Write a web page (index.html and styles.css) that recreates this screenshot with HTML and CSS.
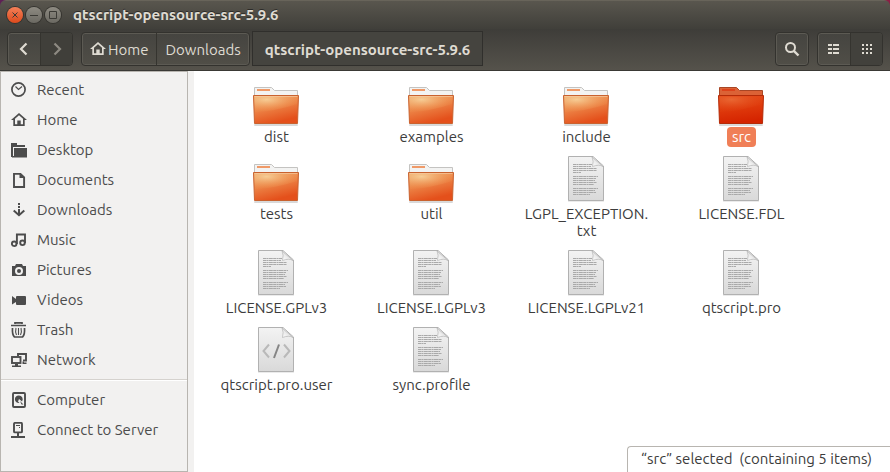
FILE: index.html
```html
<!DOCTYPE html>
<html lang="en">
<head>
<meta charset="utf-8">
<title>qtscript-opensource-src-5.9.6</title>
<link rel="stylesheet" href="styles.css">
</head>
<body>
<svg class="defs" width="0" height="0" aria-hidden="true">
  <defs>
    <linearGradient id="front" x1="0" y1="0" x2="0.4" y2="1">
      <stop offset="0" stop-color="#f0b377"/><stop offset="0.5" stop-color="#ec8245"/><stop offset="1" stop-color="#e4501b"/>
    </linearGradient>
    <radialGradient id="shine" cx="0.28" cy="0.2" r="0.75">
      <stop offset="0" stop-color="#f7d29b" stop-opacity="0.9"/><stop offset="1" stop-color="#f09a55" stop-opacity="0.15"/>
    </radialGradient>
    <linearGradient id="front-on" x1="0" y1="0" x2="0.2" y2="1">
      <stop offset="0" stop-color="#e5501f"/><stop offset="0.5" stop-color="#df3a0c"/><stop offset="1" stop-color="#d52400"/>
    </linearGradient>
    <radialGradient id="shine-on" cx="0.28" cy="0.2" r="0.75">
      <stop offset="0" stop-color="#ea6a35" stop-opacity="0.9"/><stop offset="1" stop-color="#e24a18" stop-opacity="0.1"/>
    </radialGradient>
    <linearGradient id="paper" x1="0" y1="0" x2="0" y2="1">
      <stop offset="0" stop-color="#f3f3f3"/><stop offset="1" stop-color="#d9d9d9"/>
    </linearGradient>
    <linearGradient id="curl" x1="0" y1="1" x2="1" y2="0">
      <stop offset="0" stop-color="#ffffff"/><stop offset="0.5" stop-color="#e6e6e6"/><stop offset="1" stop-color="#bdbdbd"/>
    </linearGradient>
  </defs>
  <symbol id="folder" viewBox="0 0 48 48">
    <rect x="2" y="45" width="44" height="2" rx="1" fill="#000" opacity="0.15"/>
    <path d="M2.500 17V8.500H19.500L22.500 11.500H45.500V17Z" fill="#f3f3f2" stroke="#c4c3c1"/>
    <path d="M5 10h13v2H5z" fill="#f09a68"/>
    <path d="M1.500 16.500H46.500L45.500 44.500H2.500Z" fill="url(#front)" stroke="#c9622f"/>
    <path d="M2.500 17.500H45.500L45 25Q25 32 3 33Z" fill="url(#shine)"/>
    <path d="M2.500 17.500H45.500" stroke="#f8d3ab" opacity="0.6"/>
  </symbol>
  <symbol id="folder-on" viewBox="0 0 48 48">
    <rect x="2" y="45" width="44" height="2" rx="1" fill="#000" opacity="0.15"/>
    <path d="M2.500 17V8.500H19.500L22.500 11.500H45.500V17Z" fill="#db6236" stroke="#a84625"/>
    <path d="M5 10h13v2H5z" fill="#dc421a"/>
    <path d="M1.500 16.500H46.500L45.500 44.500H2.500Z" fill="url(#front-on)" stroke="#b42b08"/>
    <path d="M2.500 17.500H45.500L45 25Q25 32 3 33Z" fill="url(#shine-on)"/>
  </symbol>
  <symbol id="page" viewBox="0 0 48 48">
    <rect x="6" y="44" width="36" height="2" fill="#000" opacity="0.08"/>
    <path d="M6.500 0.500H31L41.500 10V44.500H6.500Z" fill="url(#paper)" stroke="#b1b1b1"/>
    <path d="M30 1Q32 5 30.500 10.500Q37 8 41 10.500Z" fill="url(#curl)" stroke="#b5b5b5" stroke-width="0.7"/>
  </symbol>
  <symbol id="text-file" viewBox="0 0 48 48">
    <use href="#page" width="48" height="48"/>
    <g stroke="#a9a9a9" stroke-dasharray="3 0.4 2 0.4 4 0.4">
      <path d="M11 8.500H30M11 10.500H29M11 12.500H35M11 14.500H35M11 16.500H19M11 20.500H36M11 22.500H34M11 24.500H33M11 26.500H35M11 28.500H32M11 32.500H36M11 34.500H33M11 36.500H34M11 38.500H28"/>
    </g>
  </symbol>
  <symbol id="code-file" viewBox="0 0 48 48">
    <use href="#page" width="48" height="48"/>
    <g fill="none" stroke-width="2">
      <path d="M17 17.500L11.500 24L17 30.500M32 17.500L37.500 24L32 30.500" stroke="#b9b9b9"/>
      <path d="M27 17.500L22 31" stroke="#858585"/>
    </g>
  </symbol>
  <symbol id="home" viewBox="0 0 16 16">
    <path d="M8 1L16 8H13.700V14H2.300V8H0ZM8 3.300L4 6.800V12.300H6.300V8.500H9.700V12.300H12V6.800Z" fill="currentColor" fill-rule="evenodd"/>
  </symbol>
</svg>

<div class="window">
  <header class="chrome">
    <div class="titlebar">
      <button class="wm close" aria-label="Close"><svg viewBox="0 0 16 16"><path d="M5.500 5.500l5 5m0-5l-5 5"/></svg></button>
      <button class="wm" aria-label="Minimize"><svg viewBox="0 0 16 16"><path d="M4 8.500h8"/></svg></button>
      <button class="wm" aria-label="Maximize"><svg viewBox="0 0 16 16"><path d="M4.500 4.500h7v7h-7z"/></svg></button>
      <h1>qtscript-opensource-src-5.9.6</h1>
    </div>
    <div class="toolbar">
      <div class="group">
        <button class="tool" aria-label="Back"><svg viewBox="0 0 16 16"><path d="M10.500 2.500L5 8l5.500 5.500" fill="none" stroke="currentColor" stroke-width="2.200"/></svg></button>
        <button class="tool off" aria-label="Forward"><svg viewBox="0 0 16 16"><path d="M5.500 2.500L11 8l-5.500 5.500" fill="none" stroke="currentColor" stroke-width="2.200"/></svg></button>
      </div>
      <nav class="path" aria-label="Path">
        <div class="group">
          <button class="crumb"><svg viewBox="0 0 16 16"><use href="#home"/></svg>Home</button>
          <button class="crumb">Downloads</button>
        </div>
        <button class="crumb current">qtscript-opensource-src-5.9.6</button>
      </nav>
      <div class="group search">
        <button class="tool" aria-label="Search"><svg viewBox="0 0 16 16"><g fill="none" stroke="currentColor"><circle cx="6.500" cy="6.500" r="4.500" stroke-width="2"/><path d="M9.800 9.800L14.500 14.500" stroke-width="2.400"/></g></svg></button>
      </div>
      <div class="group">
        <button class="tool" aria-label="List view"><svg viewBox="0 0 16 16"><path d="M2 3h4v2H2zM7 3h6v2H7zM2 7h4v2H2zM7 7h6v2H7zM2 11h4v2H2zM7 11h6v2H7z" fill="currentColor"/></svg></button>
        <button class="tool active" aria-label="Icon view"><svg viewBox="0 0 16 16"><path d="M3 3h2v2H3zM7 3h2v2H7zM11 3h2v2h-2zM3 7h2v2H3zM7 7h2v2H7zM11 7h2v2h-2zM3 11h2v2H3zM7 11h2v2H7zM11 11h2v2h-2z" fill="currentColor"/></svg></button>
      </div>
    </div>
  </header>

  <div class="body">
    <nav class="sidebar" aria-label="Places">
      <a href="#"><svg viewBox="0 0 16 16"><circle cx="7.500" cy="7.500" r="6.600" fill="none" stroke="currentColor" stroke-width="1.700"/><path d="M4.500 4.500L7.500 7.500L11 4.500" fill="none" stroke="currentColor" stroke-width="1.200"/></svg>Recent</a>
      <a href="#"><svg viewBox="0 0 16 16"><use href="#home"/></svg>Home</a>
      <a href="#"><svg viewBox="0 0 16 16"><path d="M0 1H6V3H14V5H2V15H0ZM3 6H16V15.500H1V14H3Z" fill="currentColor"/></svg>Desktop</a>
      <a href="#"><svg viewBox="0 0 16 16"><path d="M3 1.900H9.500L13.100 5.500V15H3Z" fill="none" stroke="currentColor" stroke-width="1.900"/><path d="M8.500 1.500V6H13.500Z" fill="currentColor"/></svg>Documents</a>
      <a href="#"><svg viewBox="0 0 16 16"><path d="M7 1h2v2H7zM7 4h2v2H7zM7 7h2v6H7z" fill="currentColor"/><path d="M2.700 8.500L8 13.200L13.300 8.500" fill="none" stroke="currentColor" stroke-width="2"/></svg>Downloads</a>
      <a href="#"><svg viewBox="0 0 16 16"><g fill="none" stroke="currentColor" stroke-width="1.900"><circle cx="3.200" cy="11.800" r="2.300"/><circle cx="11.500" cy="10.800" r="2.300"/><path d="M5.900 12V2.500H14V11"/></g></svg>Music</a>
      <a href="#"><svg viewBox="0 0 16 16"><path fill-rule="evenodd" d="M5 2H11L12 4H15V14H1V4H4ZM8 5A4 4 0 1 0 8 13A4 4 0 1 0 8 5Z" fill="currentColor"/><circle cx="8" cy="9" r="2" fill="currentColor"/></svg>Pictures</a>
      <a href="#"><svg viewBox="0 0 16 16"><path d="M1 4L5 7V10L1 12.500Z" fill="currentColor"/><rect x="5" y="4" width="10" height="9" rx="1" fill="currentColor"/></svg>Videos</a>
      <a href="#"><svg viewBox="0 0 16 16"><g fill="none" stroke="currentColor"><path d="M0 3.500H15M4 2V0.800H11V2" stroke-width="1.700"/><path d="M1.500 6Q1 13 3.500 15H11.500Q14 13 13.500 6" stroke-width="1.700"/><path d="M5 6Q4 10 5.500 13M7.500 6V13M10 6Q11 10 9.500 13" stroke-width="1.100"/></g></svg>Trash</a>
      <a href="#"><svg viewBox="0 0 16 16"><g fill="none" stroke="currentColor" stroke-width="1.900"><path d="M7 4V2H15V8.500H12"/><rect x="1" y="5" width="8.500" height="6"/></g><path d="M4 12h3v1.500H10V15H1V13.500H4zM11.500 9.500H13V10.500H15.500V12H11.500Z" fill="currentColor"/></svg>Network</a>
      <hr>
      <a href="#"><svg viewBox="0 0 16 16"><rect x="2" y="1" width="12" height="14" rx="1" fill="none" stroke="currentColor" stroke-width="1.900"/><path d="M8 3.500A3.800 3.800 0 1 0 8.500 11L7 9.500L8 7L11 9.500A3.800 3.800 0 0 0 8 3.500ZM9 9L12.500 12.500H10.500Z" fill="currentColor"/></svg>Computer</a>
      <a href="#"><svg viewBox="0 0 16 16"><rect x="3" y="0.900" width="8" height="9.500" rx="1" fill="none" stroke="currentColor" stroke-width="1.900"/><path d="M5 3h4v1H5zM8 5h1v1H8zM6 11h2v3H6zM0 14h14v2H0z" fill="currentColor"/></svg>Connect to Server</a>
    </nav>

    <main class="files">
      <button class="item"><svg><use href="#folder"/></svg><span>dist</span></button>
      <button class="item"><svg><use href="#folder"/></svg><span>examples</span></button>
      <button class="item"><svg><use href="#folder"/></svg><span>include</span></button>
      <button class="item selected" aria-pressed="true"><svg><use href="#folder-on"/></svg><span>src</span></button>
      <button class="item"><svg><use href="#folder"/></svg><span>tests</span></button>
      <button class="item"><svg><use href="#folder"/></svg><span>util</span></button>
      <button class="item"><svg><use href="#text-file"/></svg><span>LGPL_EXCEPTION.<wbr>txt</span></button>
      <button class="item"><svg><use href="#text-file"/></svg><span>LICENSE.FDL</span></button>
      <button class="item"><svg><use href="#text-file"/></svg><span>LICENSE.GPLv3</span></button>
      <button class="item"><svg><use href="#text-file"/></svg><span>LICENSE.LGPLv3</span></button>
      <button class="item"><svg><use href="#text-file"/></svg><span>LICENSE.LGPLv21</span></button>
      <button class="item"><svg><use href="#text-file"/></svg><span>qtscript.pro</span></button>
      <button class="item"><svg><use href="#code-file"/></svg><span>qtscript.pro.user</span></button>
      <button class="item"><svg><use href="#text-file"/></svg><span>sync.profile</span></button>
    </main>
    <div class="status" role="status">“src” selected&nbsp; (containing 5 items)</div>
  </div>
</div>
</body>
</html>
```
FILE: styles.css
```css
* { box-sizing: border-box; }

body {
  margin: 0;
  background: linear-gradient(to right, #5e2055, #8c1f45);
  color: #3c3c3c;
  font: 15px/17px "Ubuntu", "Noto Sans", sans-serif;
}

button {
  margin: 0;
  padding: 0;
  border: 0;
  background: none;
  color: inherit;
  font: inherit;
}

.defs { position: absolute; }

.window {
  display: flex;
  flex-direction: column;
  min-height: 100vh;
}

.chrome {
  color: #dfdbd2;
  border-radius: 6px 6px 0 0;
  overflow: hidden;
  text-shadow: 0 -1px #2c2b28;
}

.titlebar {
  display: flex;
  align-items: center;
  gap: 3px;
  height: 29px;
  padding-left: 7px;
  background: linear-gradient(#59564e, #403f3a);
  border-top: 1px solid #68645a;
}

.titlebar h1 {
  margin: 0 0 0 9px;
  font-size: 15px;
  line-height: 16px;
  font-weight: 700;
}

.wm {
  width: 16px;
  height: 16px;
  border-radius: 50%;
  background: linear-gradient(#8e8b82, #6b6962);
  box-shadow: 0 0 0 1px #35342f;
}

.wm.close { background: linear-gradient(#f58058, #dd4a1c); }

.wm svg {
  display: block;
  width: 16px;
  height: 16px;
  fill: none;
  stroke: #3b3a35;
}

.toolbar {
  display: flex;
  align-items: center;
  height: 42px;
  padding: 0 7px 2px;
  background: linear-gradient(#3e3d39, #55524b);
  border-bottom: 1px solid #3a3935;
}

.group {
  display: flex;
  border: 1px solid #33322e;
  border-radius: 4px;
  background: linear-gradient(#454440, #504e47);
  box-shadow: inset 0 0 0 1px #5c5a53;
}

.group button + button { border-left: 1px solid #35342f; }

.tool {
  display: grid;
  place-items: center;
  width: 32px;
  height: 32px;
}

.tool svg, .crumb svg, .sidebar svg {
  width: 16px;
  height: 16px;
  flex: none;
}

.tool.off { color: #8d8a82; background: #403f3a; border-radius: 0 3px 3px 0; }
.tool.active { background: #42413c; border-radius: 0 3px 3px 0; }

.path {
  display: flex;
  align-items: center;
  gap: 2px;
  margin-left: 8px;
}

.crumb {
  display: flex;
  align-items: center;
  height: 32px;
  padding: 1px 8px 0;
  gap: 2px;
  white-space: nowrap;
}

.crumb.current {
  height: 35px;
  padding: 1px 12px 0;
  border: 1px solid #302f2c;
  background: #45443f;
  font-weight: 700;
}

.search {
  margin-left: auto;
  margin-right: 8px;
}

.body {
  position: relative;
  display: flex;
  flex: 1;
  background: #fff;
}

.sidebar {
  flex: none;
  width: 188px;
  padding: 3px 0;
  background: #f2f1f0;
  border: 1px solid #b8b5b0;
  box-shadow: 6px 0 #f2f1f0;
}

.sidebar a {
  display: flex;
  align-items: center;
  gap: 10px;
  height: 30px;
  padding-left: 10px;
  color: #4c4c4c;
  line-height: 16px;
  text-decoration: none;
}

.sidebar hr {
  height: 2px;
  margin: 4px 0;
  border: 0;
  border-top: 1px solid #d5d2ce;
  background: #fff;
}

.files {
  flex: 1;
  display: grid;
  grid-template-columns: repeat(auto-fill, 155px);
  align-content: start;
  row-gap: 9px;
  margin-left: 6px;
  padding: 8px 0 0 5px;
}

.item {
  display: flex;
  flex-direction: column;
  align-items: center;
}

.item svg {
  width: 48px;
  height: 48px;
  margin-right: 2px;
}

.item span {
  max-width: 140px;
  padding: 1px 5px 2px;
  border-radius: 4px;
}

.item.selected span {
  background: #f07f57;
  color: #fff;
}

.status {
  position: absolute;
  right: 0;
  bottom: 0;
  padding: 3px 18px 5px 13px;
  border: 1px solid #b8b5b0;
  border-width: 1px 0 0 1px;
  border-radius: 4px 0 0 0;
  background: #fff;
}
```
